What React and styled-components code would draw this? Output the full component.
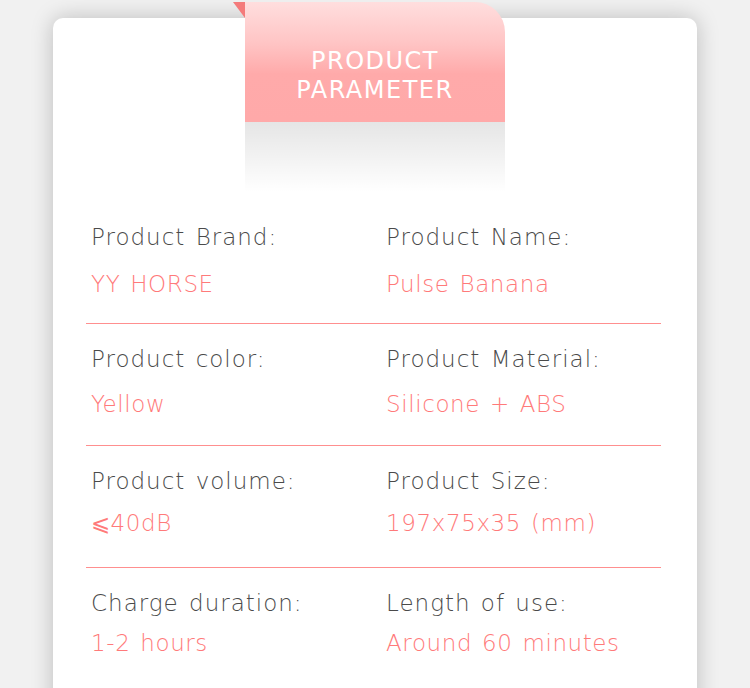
import React from "react"
import styled, { createGlobalStyle } from "styled-components"

const GlobalStyle = createGlobalStyle`
    body {
        margin: 0;
        background: #f1f1f1;
        font-family: "DejaVu Sans", "Liberation Sans", sans-serif;
        overflow: hidden;
    }
`

const Page = styled.div`
    width: 750px;
    height: 688px;
    padding-top: 18px;
    box-sizing: border-box;
    overflow: hidden;
`

const Card = styled.div`
    position: relative;
    width: 644px;
    height: 720px;
    margin: 0 auto;
    background: #ffffff;
    border-radius: 10px;
    box-shadow: 0 0 22px rgba(0, 0, 0, 0.22);
    display: flex;
    flex-direction: column;
    align-items: center;
`

const Ribbon = styled.div`
    position: relative;
    width: 260px;
    height: 120px;
    margin-top: -16px;
    border-top-right-radius: 30px;
    background: linear-gradient(to bottom, #ffdede 0%, #ffc4c4 35%, #ffaaaa 60%, #ffa9a9 100%);
    color: #fff;
    display: flex;
    flex-direction: column;
    align-items: center;
    justify-content: center;
    font-family: "DejaVu Sans", sans-serif;
    font-size: 24px;
    font-weight: 400;
    line-height: 29px;
    letter-spacing: 1.5px;
    padding-top: 27px;
    box-sizing: border-box;

    &::before {
        content: "";
        position: absolute;
        left: -12px;
        top: 0;
        border-style: solid;
        border-width: 0 12px 16px 0;
        border-color: transparent #f47b7b transparent transparent;
    }

    &::after {
        content: "";
        position: absolute;
        left: 0;
        right: 0;
        top: 120px;
        height: 70px;
        background: linear-gradient(to bottom, rgba(0, 0, 0, 0.1), rgba(0, 0, 0, 0));
    }
`

const List = styled.div`
    align-self: stretch;
    margin: 80px 36px 0 33px;
`

const Row = styled.div`
    display: grid;
    grid-template-columns: 295px 1fr;
    height: 121px;
    box-sizing: border-box;
    padding: 20px 0 0 5px;
`

const Divider = styled.div`
    height: 1px;
    background: #ff8f8f;
`

const Cell = styled.div`
    display: flex;
    flex-direction: column;
`

const Label = styled.div`
    font-size: 23px;
    font-weight: 200;
    line-height: 30px;
    color: #4a4a4a;
    letter-spacing: 1px;
    word-spacing: 2px;
    white-space: nowrap;
`

const Value = styled.div`
    margin-top: ${(p) => p.$gap}px;
    font-size: 23px;
    font-weight: 200;
    line-height: 30px;
    color: #ff7a7a;
    letter-spacing: 0.6px;
    word-spacing: 2px;
    white-space: nowrap;
`

const rows = [
    [
        ["Product Brand:", "YY HORSE"],
        ["Product Name:", "Pulse Banana"],
    ],
    [
        ["Product color:", "Yellow"],
        ["Product Material:", "Silicone + ABS"],
    ],
    [
        ["Product volume:", "⩽40dB"],
        ["Product Size:", "197x75x35 (mm)"],
    ],
    [
        ["Charge duration:", "1-2 hours"],
        ["Length of use:", "Around 60 minutes"],
    ],
]

const gaps = [17, 15, 12, 10]

export default function App() {
    return (
        <Page>
            <GlobalStyle />
            <Card>
                <Ribbon>
                    <span>PRODUCT</span>
                    <span>PARAMETER</span>
                </Ribbon>
                <List>
                    {rows.map((row, i) => (
                        <React.Fragment key={i}>
                            <Row>
                                {row.map(([label, value]) => (
                                    <Cell key={label}>
                                        <Label>{label}</Label>
                                        <Value $gap={gaps[i]}>{value}</Value>
                                    </Cell>
                                ))}
                            </Row>
                            {i < rows.length - 1 && <Divider />}
                        </React.Fragment>
                    ))}
                </List>
            </Card>
        </Page>
    )
}
